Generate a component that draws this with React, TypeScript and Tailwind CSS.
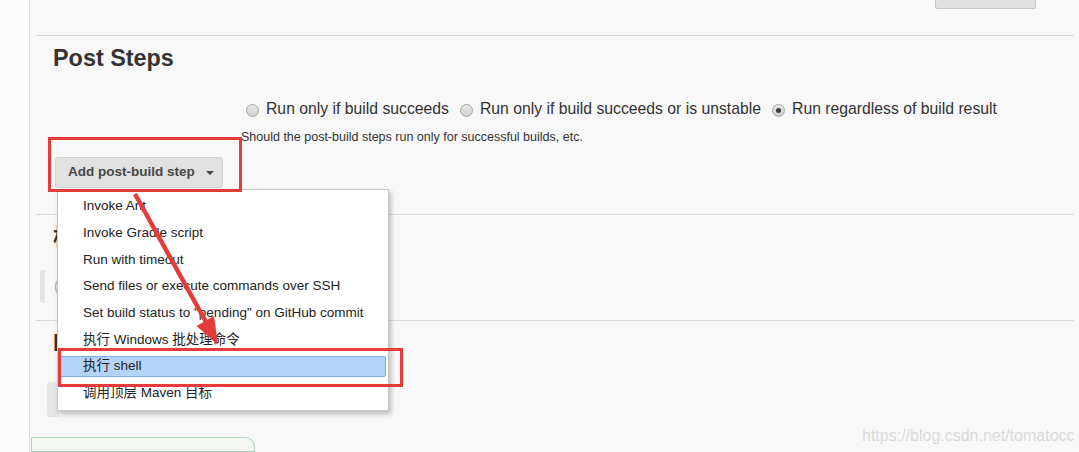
const menuItems = [
  "Invoke Ant",
  "Invoke Gradle script",
  "Run with timeout",
  "Send files or execute commands over SSH",
  'Set build status to "pending" on GitHub commit',
  "执行 Windows 批处理命令",
  "执行 shell",
  "调用顶层 Maven 目标",
];

function Radio({ checked }: { checked?: boolean }) {
  return (
    <span className="mt-[4px] flex h-[13px] w-[13px] shrink-0 items-center justify-center rounded-full border border-[#a3a3a3] bg-gradient-to-b from-[#e8e8e8] to-[#d0d0d0]">
      {checked && <span className="h-[5px] w-[5px] rounded-full bg-[#3a3a3a]" />}
    </span>
  );
}

function RadioOption({ label, checked }: { label: string; checked?: boolean }) {
  return (
    <label className="flex items-start gap-[7px]">
      <Radio checked={checked} />
      <span className="whitespace-nowrap">{label}</span>
    </label>
  );
}

function Arrow() {
  return (
    <svg className="pointer-events-none absolute left-0 top-0" width="1079" height="452" viewBox="0 0 1079 452">
      <line x1="135" y1="194" x2="206" y2="322" stroke="#e63b3b" strokeWidth="4.5" />
      <polygon points="218,345 196.5,326 214,316" fill="#e63b3b" />
    </svg>
  );
}

export default function App() {
  return (
    <div className="relative flex h-[452px] w-[1079px] overflow-hidden bg-[#fcfcfc] font-['Liberation_Sans','Noto_Sans_CJK_SC',sans-serif] text-[#333]">
      {/* left gutter */}
      <div className="w-[29px] shrink-0" />

      {/* main form */}
      <div className="flex flex-1 flex-col border-l border-[#dcdcdc] bg-[#f8f8f8]">
        <div className="flex flex-col pl-[6px] pr-[5px]">
          {/* previous section tail */}
          <div className="flex h-[35px] justify-end">
            <div className="mr-[38px] h-[9px] w-[101px] rounded-b-[3px] border border-t-0 border-[#c6c6c6] bg-[#e0e0e0]" />
          </div>

          {/* Post Steps */}
          <div className="flex flex-col border-t border-[#d9d9d9] pb-[26px] pt-[9px]">
            <h2 className="h-[26px] pl-[17px] text-[23.4px] font-bold leading-[26px] text-[#333]">Post Steps</h2>
            <div className="mt-[29px] flex h-[18px] gap-[11px] pl-[210px] text-[15.75px] leading-[18px]">
              <RadioOption label="Run only if build succeeds" />
              <RadioOption label="Run only if build succeeds or is unstable" />
              <RadioOption label="Run regardless of build result" checked />
            </div>
            <p className="mt-[12px] h-[14px] pl-[205px] text-[12.5px] leading-[14px]">
              Should the post-build steps run only for successful builds, etc.
            </p>
            <div className="mt-[13px] pl-[19px]">
              <button className="flex h-[31px] w-[168px] items-center rounded-[3px] border border-[#d2d2d2] bg-[#e1e1e1] pl-[12px] text-[13.5px] font-bold text-[#474747]">
                <span>Add post-build step</span>
                <span className="ml-[11px] h-0 w-0 border-x-[4px] border-t-[4px] border-x-transparent border-t-[#444]" />
              </button>
            </div>
          </div>

          {/* Build settings (mostly hidden by the open menu) */}
          <div className="flex flex-col border-t border-[#d9d9d9] pb-[17px] pt-[9px]">
            <h2 className="h-[26px] pl-[17px] text-[23px] font-bold leading-[26px]">构建</h2>
            <div className="ml-[4px] mt-[20px] flex h-[33px] items-center">
              <div className="h-[33px] w-[5px] rounded-l-[3px] bg-[#e4e4e4]" />
              <span className="ml-[9px] text-[14px] text-[#aaa]">(</span>
            </div>
          </div>

          {/* Post-build actions */}
          <div className="flex flex-col border-t border-[#d9d9d9] pt-[9px]">
            <h2 className="h-[26px] pl-[17px] text-[23px] font-bold leading-[26px]">Post</h2>
            <div className="ml-[11px] mt-[26px] h-[35px] w-[12px] rounded-l-[3px] bg-[#e6e6e6]" />
          </div>
        </div>

        <div className="ml-[1px] mt-[20px] h-[30px] w-[224px] rounded-tr-[10px] border border-[#acd2b9] bg-[#f3f8f2]" />
      </div>

      {/* dropdown menu */}
      <div className="absolute left-[57px] top-[189px] flex h-[222px] w-[332px] flex-col border border-[#c8c8c8] bg-white pt-[3px] shadow-[2px_3px_5px_rgba(0,0,0,0.25)]">
        {menuItems.map((item) => (
          <div key={item} className="flex h-[26.7px] shrink-0 items-center px-[2px]">
            {item === "执行 shell" ? (
              <div className="flex h-[21px] flex-1 items-center rounded-[2px] border border-[#7da9ec] bg-[#b3d3fb] pl-[22px] text-[13.5px] text-[#222]">
                {item}
              </div>
            ) : (
              <div className="flex h-[21px] flex-1 items-center pl-[23px] text-[13.5px] text-[#222]">{item}</div>
            )}
          </div>
        ))}
      </div>

      {/* annotations */}
      <div className="pointer-events-none absolute left-[48px] top-[137px] h-[55px] w-[194px] border-[3px] border-[#e63b3b]" />
      <div className="pointer-events-none absolute left-[58px] top-[348px] h-[39px] w-[345px] border-[3px] border-[#e63b3b]" />
      <Arrow />

      <span className="absolute left-[862px] top-[424px] text-[16px] text-[#dadada]">https://blog.csdn.net/tomatocc</span>
    </div>
  );
}
